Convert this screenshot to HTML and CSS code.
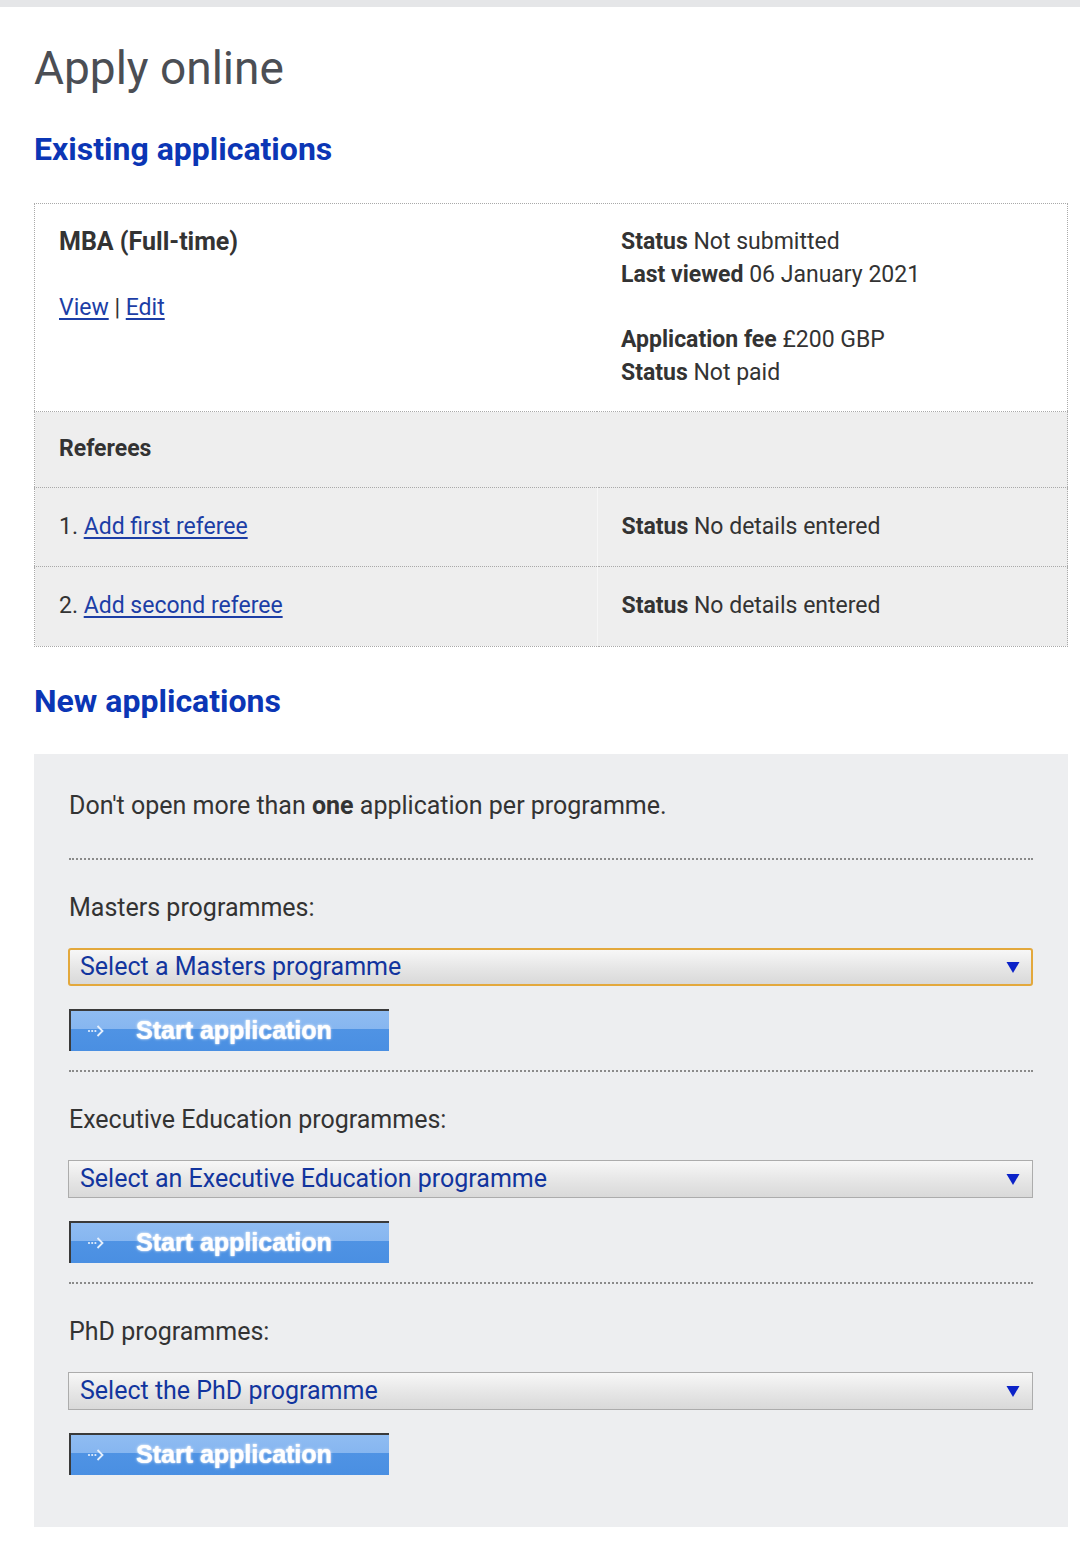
FILE: index.html
```html
<!DOCTYPE html>
<html lang="en">
<head>
<meta charset="utf-8">
<title>Apply online</title>
<link rel="stylesheet" href="styles.css">
</head>
<body>
<div class="topbar"></div>
<main class="page">
  <h1 class="title">Apply online</h1>
  <h2 class="section-title">Existing applications</h2>
  <table class="apps">
    <tr class="app-row">
      <td class="cell cell-left">
        <div class="prog-name">MBA (Full-time)</div>
        <div class="actions"><a href="#" class="link">View</a> | <a href="#" class="link">Edit</a></div>
      </td>
      <td class="cell cell-right">
        <div><b>Status</b> Not submitted</div>
        <div><b>Last viewed</b> 06 January 2021</div>
        <div class="gap-line"><b>Application fee</b> £200 GBP</div>
        <div><b>Status</b> Not paid</div>
      </td>
    </tr>
    <tr class="ref-head">
      <td class="cell" colspan="2"><b>Referees</b></td>
    </tr>
    <tr class="ref-row">
      <td class="cell">1. <a href="#" class="link">Add first referee</a></td>
      <td class="cell cell-right split"><b>Status</b> No details entered</td>
    </tr>
    <tr class="ref-row">
      <td class="cell">2. <a href="#" class="link">Add second referee</a></td>
      <td class="cell cell-right split"><b>Status</b> No details entered</td>
    </tr>
  </table>

  <h2 class="section-title new-title">New applications</h2>
  <section class="new-box">
    <p class="intro">Don't open more than <b>one</b> application per programme.</p>

    <div class="group">
      <div class="label">Masters programmes:</div>
      <div class="select focused"><span>Select a Masters programme</span><svg class="caret" width="14" height="14" viewBox="0 0 14 14"><path d="M0.5 2 H13.5 L7 13 Z" fill="#0b22c8"/></svg></div>
      <div class="start-btn"><svg class="btn-arrow" width="18" height="16" viewBox="0 0 18 16"><circle cx="2" cy="8" r="1.1" fill="#e6f0fd"/><circle cx="5.2" cy="8" r="1.1" fill="#e6f0fd"/><circle cx="8.4" cy="8" r="1.1" fill="#e6f0fd"/><path d="M10.5 3 L15.5 8 L10.5 13" fill="none" stroke="#e6f0fd" stroke-width="1.8"/></svg><span class="btn-text">Start application</span></div>
    </div>

    <div class="group">
      <div class="label">Executive Education programmes:</div>
      <div class="select"><span>Select an Executive Education programme</span><svg class="caret" width="14" height="14" viewBox="0 0 14 14"><path d="M0.5 2 H13.5 L7 13 Z" fill="#0b22c8"/></svg></div>
      <div class="start-btn"><svg class="btn-arrow" width="18" height="16" viewBox="0 0 18 16"><circle cx="2" cy="8" r="1.1" fill="#e6f0fd"/><circle cx="5.2" cy="8" r="1.1" fill="#e6f0fd"/><circle cx="8.4" cy="8" r="1.1" fill="#e6f0fd"/><path d="M10.5 3 L15.5 8 L10.5 13" fill="none" stroke="#e6f0fd" stroke-width="1.8"/></svg><span class="btn-text">Start application</span></div>
    </div>

    <div class="group last">
      <div class="label">PhD programmes:</div>
      <div class="select"><span>Select the PhD programme</span><svg class="caret" width="14" height="14" viewBox="0 0 14 14"><path d="M0.5 2 H13.5 L7 13 Z" fill="#0b22c8"/></svg></div>
      <div class="start-btn"><svg class="btn-arrow" width="18" height="16" viewBox="0 0 18 16"><circle cx="2" cy="8" r="1.1" fill="#e6f0fd"/><circle cx="5.2" cy="8" r="1.1" fill="#e6f0fd"/><circle cx="8.4" cy="8" r="1.1" fill="#e6f0fd"/><path d="M10.5 3 L15.5 8 L10.5 13" fill="none" stroke="#e6f0fd" stroke-width="1.8"/></svg><span class="btn-text">Start application</span></div>
    </div>
  </section>
</main>
</body>
</html>
```
FILE: styles.css
```css
html, body {
  margin: 0;
  padding: 0;
  background: #ffffff;
}
body {
  font-family: Roboto, "Noto Sans", Arial, sans-serif;
  color: #333333;
  font-size: 23px;
  line-height: 32.5px;
}
.topbar {
  height: 7px;
  background: #e5e6e8;
}
.page {
  padding: 0 12px 0 34px;
}
.title {
  margin: 33px 0 0;
  font-size: 46px;
  line-height: 56px;
  font-weight: 400;
  color: #4b4e54;
}
.section-title {
  margin: 35px 0 0;
  font-size: 32px;
  line-height: 36px;
  font-weight: 700;
  color: #0b36b5;
}
.apps {
  margin-top: 36px;
  width: 1034px;
  border-collapse: collapse;
  border: 1px dotted #a9a9a9;
}
.cell {
  padding: 0 24px;
  vertical-align: top;
  border: none;
}
.app-row .cell {
  padding-top: 22px;
  padding-bottom: 22px;
  background: #ffffff;
}
.cell-left {
  width: 514px;
}
.prog-name {
  font-weight: 700;
  font-size: 25px;
}
.actions {
  margin-top: 33px;
}
.gap-line {
  margin-top: 33px;
}
b {
  font-weight: 700;
}
.link {
  color: #1c3ea6;
  text-decoration: underline;
  text-underline-offset: 3px;
}
.ref-head .cell {
  background: #eeeeee;
  padding-top: 21px;
  padding-bottom: 21px;
  border-top: 1px dotted #a9a9a9;
}
.ref-row .cell {
  background: #eeeeee;
  padding-top: 23px;
  padding-bottom: 23px;
  border-top: 1px dotted #a9a9a9;
}
.ref-row .split {
  border-left: 1px solid #f6f6f6;
}
.new-title {
  margin-top: 36px;
}
.new-box {
  margin-top: 35px;
  width: 1034px;
  box-sizing: border-box;
  background: #edeef0;
  padding: 35px 35px 52px;
  font-size: 25px;
  line-height: 34px;
}
.intro {
  margin: 0 0 35px;
}
.group {
  border-top: 2px dotted #8a8a8a;
  padding-top: 31px;
  padding-bottom: 19px;
}
.group.last {
  padding-bottom: 0;
}
.label {
  color: #333333;
}
.select {
  margin-top: 23px;
  margin-left: -1px;
  height: 38px;
  box-sizing: border-box;
  display: flex;
  align-items: center;
  justify-content: space-between;
  padding: 0 12px 0 11px;
  border: 1px solid #acacac;
  background: linear-gradient(#f7f7f7, #e4e4e4 60%, #d9d9d9);
  color: #12359e;
  font-size: 25px;
}
.select.focused {
  border: 2px solid #e3a83c;
  border-radius: 3px;
  padding-left: 10px;
  padding-right: 11px;
}
.caret {
  flex: none;
  margin-top: 1px;
}
.start-btn {
  margin-top: 23px;
  width: 320px;
  height: 42px;
  box-sizing: border-box;
  display: flex;
  align-items: center;
  border-top: 2px solid #3a3a3a;
  border-left: 2px solid #3a3a3a;
  background: linear-gradient(#8fbcf2 0%, #86b6f0 45%, #4f93e4 46%, #4a8fe2 100%);
}
.btn-arrow {
  margin-left: 16px;
  flex: none;
}
.btn-text {
  margin-left: 31px;
  font-family: "Liberation Sans", Arial, sans-serif;
  font-weight: 700;
  font-size: 25px;
  color: rgba(255, 255, 255, 0.92);
  line-height: 1;
  text-shadow: 0 0 3px rgba(255, 255, 255, 0.85), 0 0 1px #ffffff;
}
```
